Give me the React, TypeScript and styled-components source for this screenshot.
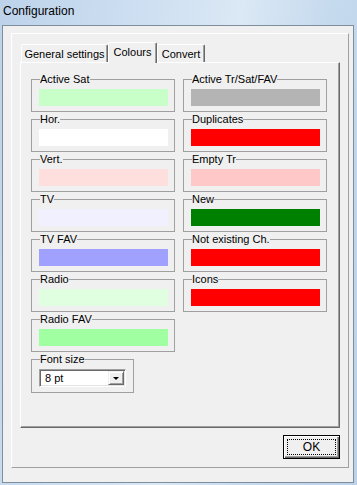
import React, { ReactElement } from 'react';
import styled, { createGlobalStyle } from 'styled-components';

type Swatch = {
  label: string;
  color: string;
};

const leftColours: Swatch[] = [
  { label: 'Active Sat', color: '#c8ffc8' },
  { label: 'Hor.', color: '#ffffff' },
  { label: 'Vert.', color: '#ffdede' },
  { label: 'TV', color: '#f0f0ff' },
  { label: 'TV FAV', color: '#a0a0ff' },
  { label: 'Radio', color: '#e0ffe0' },
  { label: 'Radio FAV', color: '#a0ffa0' },
];

const rightColours: Swatch[] = [
  { label: 'Active Tr/Sat/FAV', color: '#b4b4b4' },
  { label: 'Duplicates', color: '#ff0000' },
  { label: 'Empty Tr', color: '#ffc8c8' },
  { label: 'New', color: '#008000' },
  { label: 'Not existing Ch.', color: '#ff0000' },
  { label: 'Icons', color: '#ff0000' },
];

const tabs = [
  { label: 'General settings', width: 87 },
  { label: 'Colours', width: 49 },
  { label: 'Convert', width: 48 },
];

function App(): ReactElement {
  return (
    <>
      <GlobalStyle />
      <Window>
        <TitleBar>Configuration</TitleBar>
        <Client>
          <Frame>
            <TabRow>
              {tabs.map((tab) => (
                <Tab key={tab.label} $active={tab.label === 'Colours'} $width={tab.width}>
                  {tab.label}
                </Tab>
              ))}
            </TabRow>
            <Panel>
              <Columns>
                <Column>
                  {leftColours.map((item) => (
                    <Group key={item.label}>
                      <Legend>{item.label}</Legend>
                      <ColourBar $color={item.color} />
                    </Group>
                  ))}
                  <Group $narrow>
                    <Legend>Font size</Legend>
                    <Combo>
                      <ComboText>8 pt</ComboText>
                      <ComboButton>
                        <Arrow />
                      </ComboButton>
                    </Combo>
                  </Group>
                </Column>
                <Column>
                  {rightColours.map((item) => (
                    <Group key={item.label}>
                      <Legend>{item.label}</Legend>
                      <ColourBar $color={item.color} />
                    </Group>
                  ))}
                </Column>
              </Columns>
            </Panel>
            <Footer>
              <OkButton>
                <Focus>OK</Focus>
              </OkButton>
            </Footer>
          </Frame>
        </Client>
      </Window>
    </>
  );
}

const GlobalStyle = createGlobalStyle`
  body {
    margin: 0;
    background: #c4d8ec;
    font-family: "Liberation Sans", Arial, sans-serif;
  }
`;

const Window = styled.div`
  display: flex;
  flex-direction: column;
  width: 357px;
  height: 485px;
  box-sizing: border-box;
  padding: 0 3px 2px 2px;
  background: linear-gradient(100deg, #bdd3ea 0%, #cfe0f2 35%, #dbe8f5 55%, #c6daee 75%, #bcd2ea 100%);
`;

const TitleBar = styled.div`
  height: 25px;
  box-sizing: border-box;
  padding: 4px 0 0 1px;
  font-size: 12px;
  line-height: 14px;
  color: #000;
`;

const Client = styled.div`
  flex: 1;
  box-sizing: border-box;
  padding: 7px 4px 14px 8px;
  border: 1px solid #7f8e9d;
  background: #f0f0f0;
`;

const Frame = styled.div`
  display: flex;
  flex-direction: column;
  width: 338px;
  height: 435px;
  box-sizing: border-box;
  padding: 8px 8px 8px 8px;
  border-top: 1px solid #ffffff;
  border-left: 1px solid #ffffff;
  border-right: 1px solid #a0a0a0;
  border-bottom: 1px solid #a0a0a0;
`;

const TabRow = styled.div`
  display: flex;
  align-items: flex-end;
  height: 20px;
  padding-left: 1px;
  position: relative;
  z-index: 1;
`;

const Tab = styled.div<{ $active?: boolean; $width: number }>`
  width: ${(p) => p.$width}px;
  height: ${(p) => (p.$active ? 21 : 18)}px;
  margin-bottom: ${(p) => (p.$active ? -1 : 0)}px;
  box-sizing: border-box;
  padding-top: 3px;
  text-align: center;
  font-size: 11px;
  line-height: 13px;
  color: #000;
  background: #f0f0f0;
  border-top: 1px solid #ffffff;
  border-left: 1px solid #ffffff;
  border-right: 1px solid #696969;
  border-top-left-radius: 2px;
  border-top-right-radius: 2px;
  box-shadow: inset -1px 0 0 #a0a0a0;
  white-space: nowrap;
`;

const Panel = styled.div`
  height: 366px;
  box-sizing: border-box;
  padding: 9px 12px 0 10px;
  border-top: 1px solid #ffffff;
  border-left: 1px solid #ffffff;
  border-right: 1px solid #696969;
  border-bottom: 1px solid #696969;
  box-shadow: inset -1px -1px 0 #a0a0a0;
`;

const Columns = styled.div`
  display: flex;
  gap: 8px;
`;

const Column = styled.div`
  display: flex;
  flex-direction: column;
  width: 144px;
`;

const Group = styled.fieldset<{ $narrow?: boolean }>`
  width: ${(p) => (p.$narrow ? 103 : 144)}px;
  box-sizing: border-box;
  margin: 0;
  padding: 0 6px 5px 7px;
  border: 1px solid #a0a0a0;
  min-width: 0;
`;

const Legend = styled.legend`
  margin-left: 1px;
  padding: 0;
  font-size: 11px;
  line-height: 14px;
  color: #000;
  white-space: nowrap;
`;

const ColourBar = styled.div<{ $color: string }>`
  height: 17px;
  margin-top: 3px;
  background: ${(p) => p.$color};
`;

const Combo = styled.div`
  display: flex;
  align-items: center;
  width: 87px;
  height: 18px;
  margin-top: 3px;
  box-sizing: border-box;
  border-top: 1px solid #a0a0a0;
  border-left: 1px solid #a0a0a0;
  border-right: 1px solid #ffffff;
  border-bottom: 1px solid #ffffff;
  box-shadow: inset 1px 1px 0 #696969, inset -1px -1px 0 #e3e3e3;
  background: #ffffff;
  padding: 1px;
`;

const ComboText = styled.div`
  flex: 1;
  padding-left: 4px;
  font-size: 11px;
  line-height: 14px;
  color: #000;
`;

const ComboButton = styled.div`
  display: flex;
  align-items: center;
  justify-content: center;
  width: 16px;
  height: 14px;
  box-sizing: border-box;
  background: #f0f0f0;
  border-top: 1px solid #f0f0f0;
  border-left: 1px solid #f0f0f0;
  border-right: 1px solid #696969;
  border-bottom: 1px solid #696969;
  box-shadow: inset 1px 1px 0 #ffffff, inset -1px -1px 0 #a0a0a0;
`;

const Arrow = styled.div`
  width: 0;
  height: 0;
  margin-top: 1px;
  border-left: 3px solid transparent;
  border-right: 3px solid transparent;
  border-top: 3px solid #000;
`;

const Footer = styled.div`
  display: flex;
  justify-content: flex-end;
  margin-top: 7px;
`;

const OkButton = styled.div`
  display: flex;
  width: 57px;
  height: 24px;
  box-sizing: border-box;
  padding: 3px;
  border: 1px solid #000;
  background: #f0f0f0;
  box-shadow: inset 1px 1px 0 #ffffff, inset -1px -1px 0 #696969, inset -2px -2px 0 #a0a0a0;
`;

const Focus = styled.div`
  flex: 1;
  display: flex;
  align-items: center;
  justify-content: center;
  border: 1px dotted #000;
  font-size: 12px;
  color: #000;
`;

export default App;
